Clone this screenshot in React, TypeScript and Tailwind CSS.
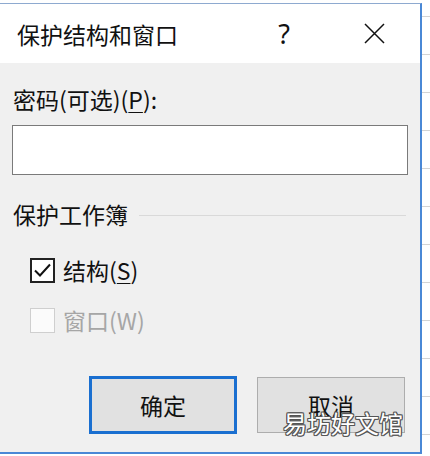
import React from 'react';

const font = { fontFamily: '"Noto Sans CJK SC", "Noto Sans", sans-serif' };

const gridRows = Array.from({ length: 11 });

const Check = ({ checked, disabled, children }: { checked?: boolean; disabled?: boolean; children: React.ReactNode }) => (
  <div className="flex items-center h-[30px] ml-[18px]">
    <div
      className={
        disabled
          ? 'w-[25px] h-[25px] border-[1.5px] border-[#cfcfcf] bg-[#fbfbfb]'
          : 'w-[25px] h-[25px] border-2 border-[#222] bg-white flex items-center justify-center'
      }
    >
      {checked && (
        <svg width="21" height="21" viewBox="0 0 21 21">
          <path d="M3 10.5 L8 15.5 L18 4.5" fill="none" stroke="#111" strokeWidth="2" />
        </svg>
      )}
    </div>
    <span className={`ml-[8px] text-[23px] leading-[30px] ${disabled ? 'text-[#a6a6a6]' : 'text-[#111]'}`}>
      {children}
    </span>
  </div>
);

export default function App() {
  return (
    <div className="w-[430px] h-[456px] flex bg-white overflow-hidden" style={font}>
      <div className="relative mt-[3px] w-[422px] h-[451px] flex flex-col border-t border-r-2 border-b-2 border-t-[#8eaad0] border-r-[#4a88d6] border-b-[#4a88d6] bg-[#f0f0f0]">
        {/* title bar */}
        <div className="h-[59px] shrink-0 bg-white flex items-center pr-[35px]">
          <span className="pl-[17px] flex-1 text-[23px] leading-[30px] text-[#111]">保护结构和窗口</span>
          <span className="w-[20px] text-center text-[27px] leading-[30px] text-[#111]" style={{ fontFamily: '"Noto Sans", sans-serif' }}>
            ?
          </span>
          <svg className="ml-[70px]" width="21" height="21" viewBox="0 0 21 21">
            <path d="M1 1 L20 20 M20 1 L1 20" stroke="#111" strokeWidth="1.5" />
          </svg>
        </div>

        {/* body */}
        <div className="flex flex-col pl-[12px] pr-[13px] pt-[21px]">
          <span className="text-[23px] leading-[30px] text-[#111] pl-[1px]">
            密码(可选)(<span className="underline underline-offset-[3px] decoration-1">P</span>):
          </span>
          <div className="mt-[11px] h-[50px] w-[396px] border border-[#7a7a7a] bg-white" />

          <div className="mt-[24px] flex items-center">
            <span className="text-[23px] leading-[30px] text-[#111] pl-[1px]">保护工作簿</span>
            <div className="ml-[11px] flex-1 h-px bg-[#d9d9d9] mt-[2px] mr-[1px]" />
          </div>

          <div className="mt-[26px]">
            <Check checked>
              结构(<span className="underline underline-offset-[3px] decoration-1">S</span>)
            </Check>
          </div>
          <div className="mt-[20px]">
            <Check disabled>窗口(W)</Check>
          </div>

          <div className="mt-[41px] flex items-center justify-end gap-[20px] mr-[2px]">
            <button className="w-[148px] h-[58px] border-[3px] border-[#1a6fd0] bg-[#e1e1e1] text-[23px] text-[#111]">
              确定
            </button>
            <button className="w-[148px] h-[56px] border border-[#adadad] bg-[#e1e1e1] text-[23px] text-[#111]">
              取消
            </button>
          </div>
        </div>

        {/* watermark */}
        <span className="absolute left-[283px] top-[404px] text-[24px] leading-[30px] text-white [text-shadow:1px_0_#555,-1px_0_#555,0_1px_#555,0_-1px_#555,1px_1px_#555,-1px_-1px_#555,1px_-1px_#555,-1px_1px_#555]">
          易坊好文馆
        </span>
      </div>

      {/* sheet behind the dialog */}
      <div className="flex-1 flex flex-col">
        <div className="h-[17px] shrink-0 border-b border-[#d4d4d4]" />
        {gridRows.map((_, i) => (
          <div key={i} className="h-[38px] shrink-0 border-b border-[#d4d4d4]" />
        ))}
      </div>
    </div>
  );
}
